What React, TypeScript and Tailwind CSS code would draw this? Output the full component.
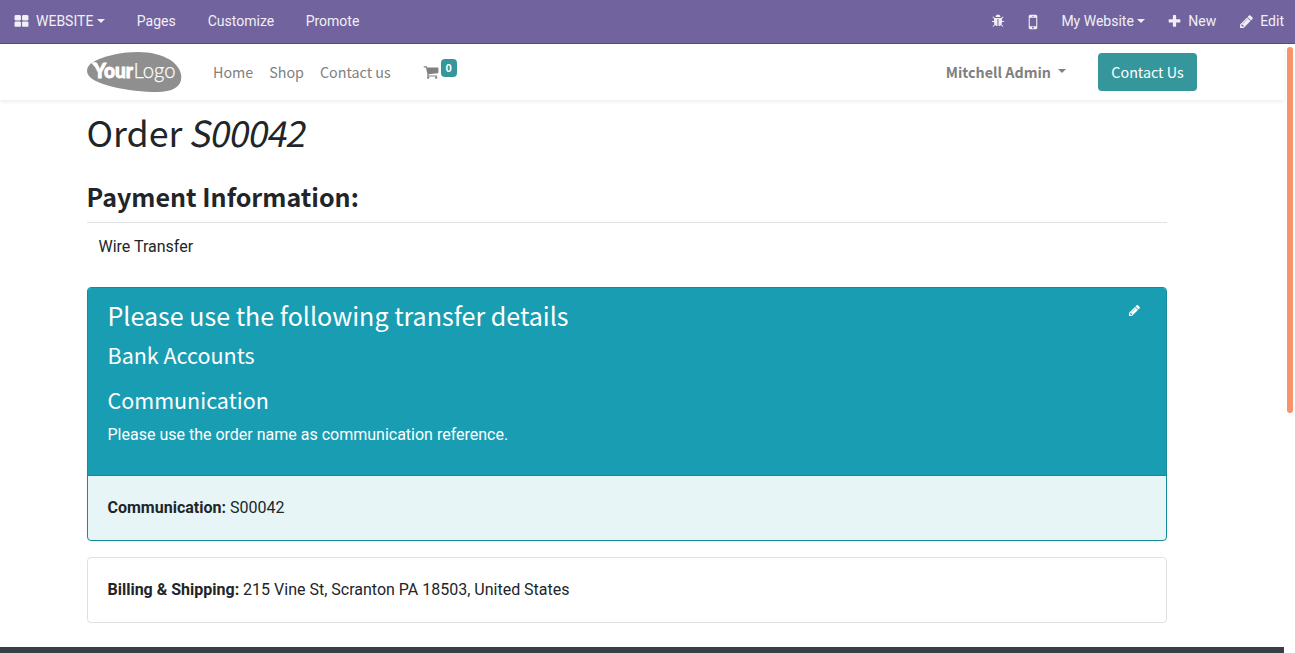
import React from "react";

const PATHS = {
  thLarge:
    "M832 1024v384q0 52-38 90t-90 38h-512q-52 0-90-38t-38-90v-384q0-52 38-90t90-38h512q52 0 90 38t38 90zm0-768v384q0 52-38 90t-90 38h-512q-52 0-90-38t-38-90v-384q0-52 38-90t90-38h512q52 0 90 38t38 90zm896 768v384q0 52-38 90t-90 38h-512q-52 0-90-38t-38-90v-384q0-52 38-90t90-38h512q52 0 90 38t38 90zm0-768v384q0 52-38 90t-90 38h-512q-52 0-90-38t-38-90v-384q0-52 38-90t90-38h512q52 0 90 38t38 90z",
  pencil:
    "M491 1536l91-91-235-235-91 91v107h128v128h107zm523-928q0-22-22-22-10 0-17 7l-542 542q-7 7-7 17 0 22 22 22 10 0 17-7l542-542q7-7 7-17zm-54-192l416 416-832 832h-416v-416zm683 96q0 53-37 90l-166 166-416-416 166-165q36-38 90-38 53 0 91 38l235 234q37 39 37 91z",
  plus:
    "M1600 736v192q0 40-28 68t-68 28h-416v416q0 40-28 68t-68 28h-192q-40 0-68-28t-28-68v-416h-416q-40 0-68-28t-28-68v-192q0-40 28-68t68-28h416v-416q0-40 28-68t68-28h192q40 0 68 28t28 68v416h416q40 0 68 28t28 68z",
  cart:
    "M704 1536q0 52-38 90t-90 38-90-38-38-90 38-90 90-38 90 38 38 90zm896 0q0 52-38 90t-90 38-90-38-38-90 38-90 90-38 90 38 38 90zm128-1088v512q0 24-16.500 42.500t-40.500 21.500l-1044 122q13 60 13 70 0 16-24 64h920q26 0 45 19t19 45-19 45-45 19h-1024q-26 0-45-19t-19-45q0-11 8-31.500t16-36 21.500-40 15.500-29.500l-177-823h-204q-26 0-45-19t-19-45 19-45 45-19h256q16 0 28.500 6.500t19.500 15.500 13 24.500 8 26 5.500 29.500 4.500 26h1201q26 0 45 19t19 45z",
  bug:
    "M1696 960q0 26-19 45t-45 19h-224q0 171-67 290l208 209q19 19 19 45t-19 45q-18 19-45 19t-45-19l-198-197q-5 5-15 13t-42 28.500-65 36.500-82 29-97 13v-896h-128v896q-51 0-101.500-13.500t-87-33-66-39-43.500-32.500l-15-14-183 207q-20 21-48 21-24 0-43-16-19-18-20.500-44.500t15.500-46.500l202-227q-58-114-58-274h-224q-26 0-45-19t-19-45 19-45 45-19h224v-294l-173-173q-19-19-19-45t19-45 45-19 45 19l173 173h844l173-173q19-19 45-19t45 19 19 45-19 45l-173 173v294h224q26 0 45 19t19 45zm-480-576h-640q0-133 93.500-226.500t226.500-93.500 226.500 93.500 93.500 226.500z",
  mobile:
    "M976 1408q0-33-23.500-56.500t-56.500-23.500-56.500 23.500-23.500 56.500 23.500 56.500 56.500 23.500 56.500-23.500 23.500-56.500zm208-160v-704q0-13-9.500-22.500t-22.500-9.500h-512q-13 0-22.500 9.500t-9.500 22.500v704q0 13 9.500 22.500t22.500 9.500h512q13 0 22.500-9.500t9.500-22.500zm-192-848q0-16-16-16h-160q-16 0-16 16t16 16h160q16 0 16-16zm288-16v1024q0 52-38 90t-90 38h-512q-52 0-90-38t-38-90v-1024q0-52 38-90t90-38h512q52 0 90 38t38 90z",
};

function Icon({ name, className }: { name: keyof typeof PATHS; className: string }) {
  return (
    <svg viewBox="0 0 1792 1792" fill="currentColor" className={`shrink-0 ${className}`}>
      <path d={PATHS[name]} />
    </svg>
  );
}

function Caret({ className }: { className: string }) {
  return (
    <svg viewBox="0 0 8 4" fill="currentColor" className={`h-1 w-2 shrink-0 ${className}`}>
      <path d="M0 0h8L4 4z" />
    </svg>
  );
}

function Logo() {
  return (
    <svg viewBox="0 0 95 40" className="h-10 w-[95px] shrink-0">
      <path
        d="M0 19C0 14 4 11 9 8.500 21 3 35 0 51 0 76 0 94.300 11 94.300 25.500 94.300 35 85 40 70 40 44 40 0 33 0 19z"
        fill="#8f8f8f"
      />
      <path d="M4 10.500h5l3 5-5-1.500z" fill="#fff" />
      <text x="6.500" y="26" textLength="39.500" lengthAdjust="spacingAndGlyphs" fill="#fff" stroke="#fff" strokeWidth="0.9" className="font-['Lato'] text-[20px] font-black">
        Your
      </text>
      <text x="46.500" y="26" textLength="42" lengthAdjust="spacingAndGlyphs" fill="#fff" stroke="#fff" strokeWidth="0.25" className="font-['Lato'] text-[21px] font-light">
        Logo
      </text>
    </svg>
  );
}

export default function App() {
  return (
    <div className="flex h-[653px] flex-col overflow-hidden bg-white font-['Roboto',sans-serif] text-base text-[#212529]">
      <header className="flex h-11 shrink-0 items-center justify-between border-b border-[#5b4c80] bg-[#71639e] pr-[11px] pl-[14px] text-sm text-[#f1eff5]">
        <div className="flex items-center pb-px">
          <Icon name="thLarge" className="mr-[7px] size-[15px]" />
          <span>WEBSITE</span>
          <Caret className="ml-1" />
          <span className="ml-[31.5px]">Pages</span>
          <span className="ml-8">Customize</span>
          <span className="ml-[31.5px]">Promote</span>
        </div>
        <div className="flex items-center pb-px">
          <Icon name="bug" className="mr-[18px] size-[14px]" />
          <Icon name="mobile" className="mt-px mr-[18px] size-5" />
          <span>My Website</span>
          <Caret className="ml-[3px]" />
          <Icon name="plus" className="ml-[22.5px] size-[15px]" />
          <span className="ml-[6px]">New</span>
          <Icon name="pencil" className="ml-[23px] size-[15px]" />
          <span className="ml-[6px]">Edit</span>
        </div>
      </header>
      <div className="flex min-h-0 flex-1">
        <div className="flex w-[1284px] shrink-0 flex-col">
          <nav className="flex h-14 shrink-0 items-center pl-[87px] font-['Noto_Sans_CJK_SC',sans-serif] text-[14.3px] leading-6 text-[#808080] shadow-[0_2px_4px_rgba(0,0,0,0.075)]">
            <Logo />
            <span className="ml-[31px]">Home</span>
            <span className="ml-4">Shop</span>
            <span className="ml-4">Contact us</span>
            <Icon name="cart" className="ml-8 size-4" />
            <span className="mb-2 ml-0.5 flex h-[18px] w-4 items-center justify-center rounded bg-[#35979c] text-[10.7px] font-bold text-white">
              0
            </span>
            <span className="ml-auto font-bold">Mitchell Admin</span>
            <Caret className="mb-0.5 ml-[7px]" />
            <button className="mr-[87px] ml-8 h-[38px] w-[99px] rounded bg-[#35979c] text-white">Contact Us</button>
          </nav>
          <main className="flex flex-1 flex-col pr-[117px] pl-[86.5px]">
            <h1 className="mt-[7px] font-['Noto_Sans_CJK_SC',sans-serif] text-[35.8px] leading-12">
              Order <em className="-ml-1 inline-block origin-bottom -skew-x-[11deg] tracking-[-0.85px] not-italic">S00042</em>
            </h1>
            <h3 className="mt-6 border-b border-[#dee2e6] pb-[9px] font-['Noto_Sans_CJK_SC',sans-serif] text-[25.05px] leading-[34px] font-bold">
              Payment Information:
            </h3>
            <div className="mt-3 pl-3 leading-6">Wire Transfer</div>
            <section className="mt-7 h-[254px] shrink-0 overflow-hidden rounded border border-[#128b9b] bg-[#e8f5f7]">
              <div className="flex h-[188px] justify-between border-b border-[#128b9b] bg-[#189db2] pt-2.5 pr-[26px] pl-5 text-white">
                <div>
                  <div className="font-['Noto_Sans_CJK_SC',sans-serif] text-[25.05px] leading-[34px]">
                    Please use the following transfer details
                  </div>
                  <div className="mt-2 font-['Noto_Sans_CJK_SC',sans-serif] text-[21.500px] leading-[29px]">Bank Accounts</div>
                  <div className="mt-4 font-['Noto_Sans_CJK_SC',sans-serif] text-[21.500px] leading-[29px]">Communication</div>
                  <div className="mt-[9px] leading-6">Please use the order name as communication reference.</div>
                </div>
                <Icon name="pencil" className="mt-[6px] -mr-px size-[13px]" />
              </div>
              <div className="pt-5 pl-5 leading-6">
                <b>Communication:</b> S00042
              </div>
            </section>
            <section className="mt-4 h-[66px] shrink-0 rounded border border-[#dee0e2] pt-5 pl-5 leading-6">
              <b>Billing &amp; Shipping:</b> 215 Vine St, Scranton PA 18503, United States
            </section>
          </main>
          <footer className="h-1.5 shrink-0 bg-[#383e45]" />
        </div>
        <div className="mt-[3px] ml-[3px] h-[366px] w-1.5 shrink-0 rounded-full bg-[#f8936c]" />
      </div>
    </div>
  );
}
